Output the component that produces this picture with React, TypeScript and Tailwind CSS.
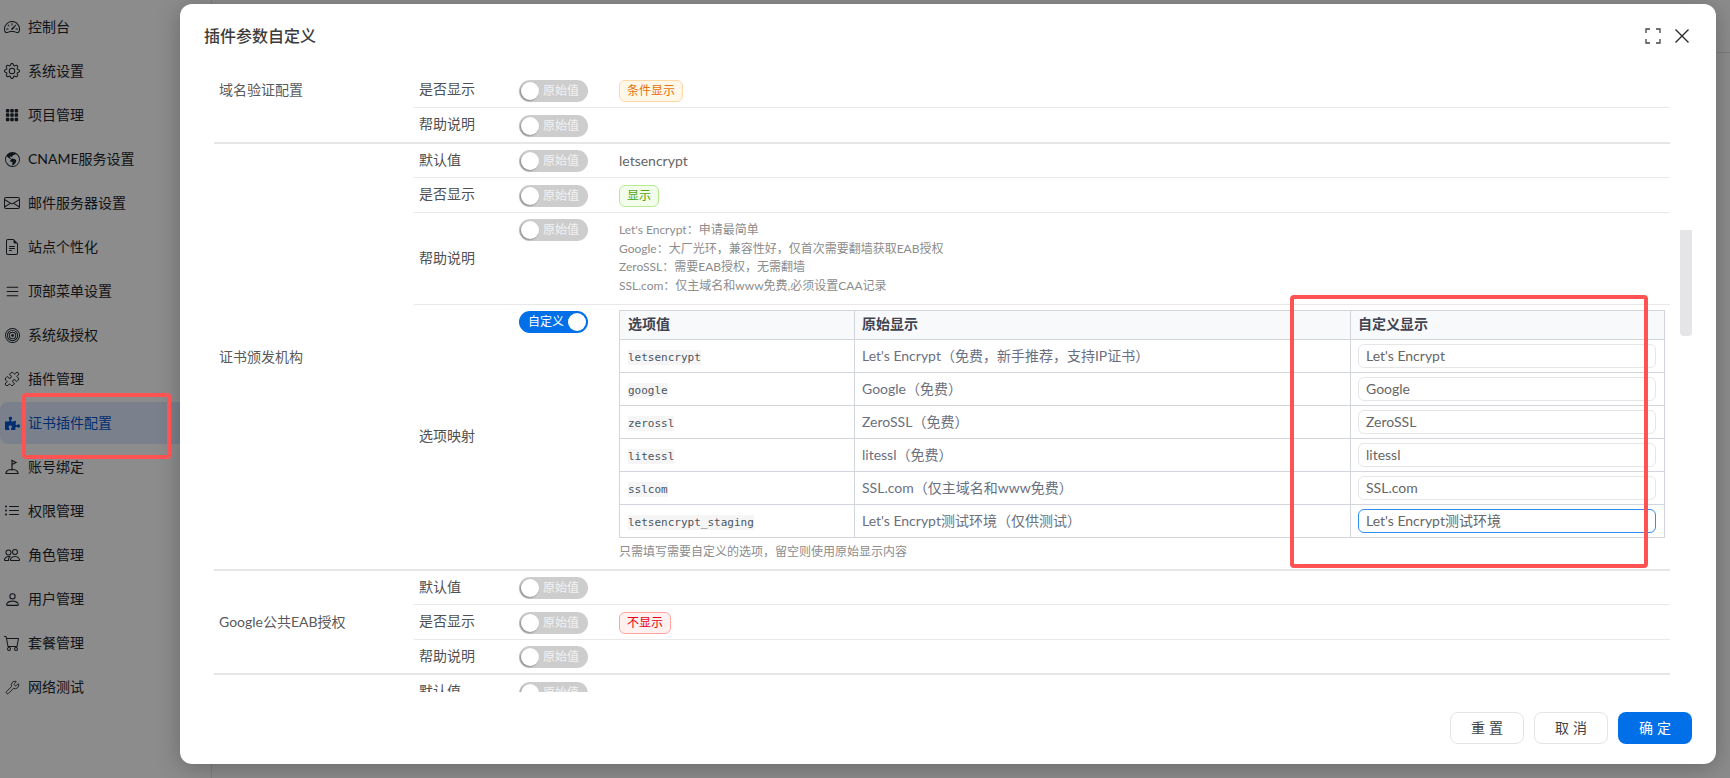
import type { ReactNode } from 'react';
import { Puzzle, Wrench } from 'lucide-react';
import { FaPuzzlePiece } from 'react-icons/fa';
import {
  BsBullseye,
  BsCart,
  BsEnvelope,
  BsFileEarmarkText,
  BsGear,
  BsGlobeAmericas,
  BsGrid3X3GapFill,
  BsList,
  BsListUl,
  BsPeople,
  BsPerson,
  BsSpeedometer2,
} from 'react-icons/bs';

const menu = [
  { label: '控制台', icon: <BsSpeedometer2 size={16} /> },
  { label: '系统设置', icon: <BsGear size={16} /> },
  { label: '项目管理', icon: <BsGrid3X3GapFill size={14} /> },
  { label: 'CNAME服务设置', icon: <BsGlobeAmericas size={15} /> },
  { label: '邮件服务器设置', icon: <BsEnvelope size={16} /> },
  { label: '站点个性化', icon: <BsFileEarmarkText size={16} /> },
  { label: '顶部菜单设置', icon: <BsList size={17} /> },
  { label: '系统级授权', icon: <BsBullseye size={15} /> },
  { label: '插件管理', icon: <Puzzle size={16} strokeWidth={1.4} /> },
  { label: '证书插件配置', icon: <FaPuzzlePiece size={15} />, active: true },
  {
    label: '账号绑定',
    icon: (
      <svg width="16" height="16" viewBox="0 0 16 16" fill="none" stroke="currentColor" strokeWidth="1.2">
        <path d="M8 11.5V1.5l4 2-4 2" />
        <path d="M8 10.5c-3.4 0-6 1.6-6 4h12c0-2.4-2.6-4-6-4z" />
      </svg>
    ),
  },
  { label: '权限管理', icon: <BsListUl size={16} /> },
  { label: '角色管理', icon: <BsPeople size={16} /> },
  { label: '用户管理', icon: <BsPerson size={17} /> },
  { label: '套餐管理', icon: <BsCart size={16} /> },
  { label: '网络测试', icon: <Wrench size={15} strokeWidth={1.4} /> },
];

const options = [
  { value: 'letsencrypt', original: "Let's Encrypt（免费，新手推荐，支持IP证书）", custom: "Let's Encrypt" },
  { value: 'google', original: 'Google（免费）', custom: 'Google' },
  { value: 'zerossl', original: 'ZeroSSL（免费）', custom: 'ZeroSSL' },
  { value: 'litessl', original: 'litessl（免费）', custom: 'litessl' },
  { value: 'sslcom', original: 'SSL.com（仅主域名和www免费）', custom: 'SSL.com' },
  { value: 'letsencrypt_staging', original: "Let's Encrypt测试环境（仅供测试）", custom: "Let's Encrypt测试环境", focused: true },
];

function Toggle({ custom }: { custom?: boolean }) {
  if (custom) {
    return (
      <div className="flex h-[22px] w-[69px] items-center justify-between rounded-full bg-[#006fe8] pl-[9px] pr-[2px] text-xs text-white">
        <span>自定义</span>
        <span className="h-[18px] w-[18px] rounded-full bg-white" />
      </div>
    );
  }
  return (
    <div className="flex h-[22px] w-[69px] items-center gap-[4px] rounded-full bg-[#cdcdcd] pl-[2px] text-xs text-[#f2f2f2]">
      <span className="h-[18px] w-[18px] rounded-full bg-white shadow-[-1px_1px_2px_rgba(0,0,0,0.35)]" />
      <span>原始值</span>
    </div>
  );
}

function Row({ className, top, children, label, custom }: { className: string; top: string; children?: ReactNode; label: string; custom?: boolean }) {
  return (
    <div className={`flex ${className}`}>
      <div className="flex w-[105px] shrink-0 items-center pb-[2px] pl-[5px] text-sm text-[#505050]">{label}</div>
      <div className={`flex min-w-0 flex-1 ${top}`}>
        <div className="w-[100px] shrink-0">
          <Toggle custom={custom} />
        </div>
        <div className="min-w-0 flex-1">{children}</div>
      </div>
    </div>
  );
}

function Tag({ className, children }: { className: string; children: ReactNode }) {
  return <span className={`flex h-[22px] items-center rounded-md border px-[7px] text-xs ${className}`}>{children}</span>;
}

function Group({ label, children }: { label: string; children: ReactNode }) {
  return (
    <div className="flex border-b-2 border-[#e6e6e6]">
      <div className="flex w-[200px] shrink-0 items-center pl-[5px] text-sm text-[#5a5a5a]">{label}</div>
      <div className="min-w-0 flex-1">{children}</div>
    </div>
  );
}

function OptionTable() {
  return (
    <div className="w-[1046px] border border-b-0 border-[#d3d5dd] text-sm">
      <div className="flex h-[29px] items-center border-b border-[#d3d5dd] bg-[#f8f9fb] font-semibold text-[#3f4450]">
        <div className="w-[234px] pb-[2px] pl-[8px]">选项值</div>
        <div className="h-full w-px bg-[#d3d5dd]" />
        <div className="w-[495px] pb-[2px] pl-[7px]">原始显示</div>
        <div className="h-full w-px bg-[#d3d5dd]" />
        <div className="flex-1 pb-[2px] pl-[7px]">自定义显示</div>
      </div>
      {options.map((o) => (
        <div key={o.value} className="flex h-[33px] items-center border-b border-[#d3d5dd] text-[#6b7080]">
          <div className="w-[234px] pl-[8px]">
            <code className="bg-[#f5f5f5] py-[1px] font-['DejaVu_Sans_Mono',monospace] text-[11px] text-[#4b5563]">{o.value}</code>
          </div>
          <div className="h-full w-px bg-[#d3d5dd]" />
          <div className="w-[495px] pl-[7px]">{o.original}</div>
          <div className="h-full w-px bg-[#d3d5dd]" />
          <div className="flex-1 pl-[7px] pr-[8px]">
            <div
              className={`flex h-[24px] items-center rounded-md border pl-[7px] text-[#666] ${
                o.focused ? 'border-[#2f8ff0]' : 'border-[#e6e6e8]'
              }`}
            >
              {o.custom}
            </div>
          </div>
        </div>
      ))}
    </div>
  );
}

export default function App() {
  return (
    <div className="relative flex h-screen w-full overflow-hidden bg-white font-['Lato','Noto_Sans_CJK_SC',sans-serif]">
      {/* 左侧菜单 */}
      <aside className="flex w-[212px] shrink-0 flex-col gap-[2px] border-r border-[#e5e5e5] pt-[6px]">
        {menu.map((m) => (
          <div
            key={m.label}
            className={`flex h-[42px] items-center rounded-l-lg text-sm ${
              m.active ? 'bg-[#dfecff] text-[#0055cc]' : 'text-[#20262e]'
            }`}
          >
            <span className="flex w-[28px] shrink-0 justify-center pr-[4px]">{m.icon}</span>
            {m.label}
          </div>
        ))}
      </aside>
      <div className="flex-1">
        <div className="h-[53px] border-b border-[#e5e5e5]" />
      </div>

      {/* 遮罩 */}
      <div className="absolute inset-0 bg-black/45" />

      {/* 弹窗 */}
      <div className="absolute left-[180px] top-[4px] flex h-[760px] w-[1536px] flex-col overflow-hidden rounded-xl bg-white shadow-[0_4px_24px_rgba(0,0,0,0.25)]">
        <div className="flex h-[68px] shrink-0 items-start justify-between pl-[24px] pr-[26px] pt-[20px]">
          <h1 className="text-base font-medium leading-[24px] text-[#3c3c3c]">插件参数自定义</h1>
          <div className="flex items-center gap-[13px] pt-[4px]">
            <svg width="16" height="16" viewBox="0 0 16 16" fill="none" stroke="#444" strokeWidth="1.3">
              <path d="M1 5V1h4M11 1h4v4M15 11v4h-4M5 15H1v-4" />
            </svg>
            <svg width="16" height="16" viewBox="0 0 16 16" fill="none" stroke="#2b2b2b" strokeWidth="1.4">
              <path d="M1.5 1.5l13 13M14.5 1.5l-13 13" />
            </svg>
          </div>
        </div>

        <div className="relative min-h-0 flex-1 overflow-hidden">
          <div className="-mt-[34px] pl-[34px]">
            <div className="w-[1456px]">
              <Group label="域名验证配置">
                <div className="h-[34px]" />
                <Row className="h-[36px] border-b border-[#e8e8e8]" top="pt-[8px]" label="是否显示">
                  <div className="flex">
                    <Tag className="border-[#ffd8a8] bg-[#fff7e8] text-[#e8710a]">条件显示</Tag>
                  </div>
                </Row>
                <Row className="h-[34px]" top="pt-[7px]" label="帮助说明" />
              </Group>
              <Group label="证书颁发机构">
                <Row className="h-[34px] border-b border-[#e8e8e8]" top="pt-[6px]" label="默认值">
                  <div className="flex h-[22px] items-center text-sm text-[#666]">letsencrypt</div>
                </Row>
                <Row className="h-[35px] border-b border-[#e8e8e8]" top="pt-[7px]" label="是否显示">
                  <div className="flex">
                    <Tag className="border-[#b7eb8f] bg-[#f3fdeb] text-[#52a40e]">显示</Tag>
                  </div>
                </Row>
                <Row className="h-[92px] border-b border-[#e8e8e8]" top="pt-[6px]" label="帮助说明">
                  <div className="pt-[2px] text-xs leading-[18.67px] text-[#8c8c8c]">
                    <p>Let's Encrypt：申请最简单</p>
                    <p>Google：大厂光环，兼容性好，仅首次需要翻墙获取EAB授权</p>
                    <p>ZeroSSL：需要EAB授权，无需翻墙</p>
                    <p>SSL.com：仅主域名和www免费,必须设置CAA记录</p>
                  </div>
                </Row>
                <Row className="h-[264px]" top="pt-[6px]" label="选项映射" custom>
                  <div className="-mt-[1px]">
                    <OptionTable />
                    <p className="pt-[5px] text-xs leading-[18px] text-[#8c8c8c]">只需填写需要自定义的选项，留空则使用原始显示内容</p>
                  </div>
                </Row>
              </Group>
              <Group label="Google公共EAB授权">
                <Row className="h-[34px] border-b border-[#e8e8e8]" top="pt-[6px]" label="默认值" />
                <Row className="h-[35px] border-b border-[#e8e8e8]" top="pt-[7px]" label="是否显示">
                  <div className="flex">
                    <Tag className="border-[#ffa39e] bg-[#fff1f0] text-[#e60012]">不显示</Tag>
                  </div>
                </Row>
                <Row className="h-[33px]" top="pt-[6px]" label="帮助说明" />
              </Group>
              <Group label="">
                <Row className="h-[34px]" top="pt-[7px]" label="默认值" />
              </Group>
            </div>
          </div>
          {/* 滚动条 */}
          <div className="absolute left-[1500px] top-[158px] h-[106px] w-[12px] rounded-b bg-[#e5e5e7]" />
        </div>

        <div className="flex h-[72px] shrink-0 items-start justify-end gap-[10px] pr-[24px] pt-[20px] text-sm">
          <button className="h-[32px] w-[74px] rounded-lg border border-[#e4e4e4] pl-[4px] tracking-[4px] text-[#444]">重置</button>
          <button className="h-[32px] w-[74px] rounded-lg border border-[#e4e4e4] pl-[4px] tracking-[4px] text-[#444]">取消</button>
          <button className="h-[32px] w-[74px] rounded-lg bg-[#006fe8] pl-[4px] tracking-[4px] text-white">确定</button>
        </div>
      </div>

      {/* 红色标注框 */}
      <div className="pointer-events-none absolute left-[22px] top-[393px] h-[66px] w-[149px] rounded-sm border-4 border-[#ff5252]" />
      <div className="pointer-events-none absolute left-[1290px] top-[295px] h-[273px] w-[358px] rounded-sm border-4 border-[#ff5252]" />
    </div>
  );
}
